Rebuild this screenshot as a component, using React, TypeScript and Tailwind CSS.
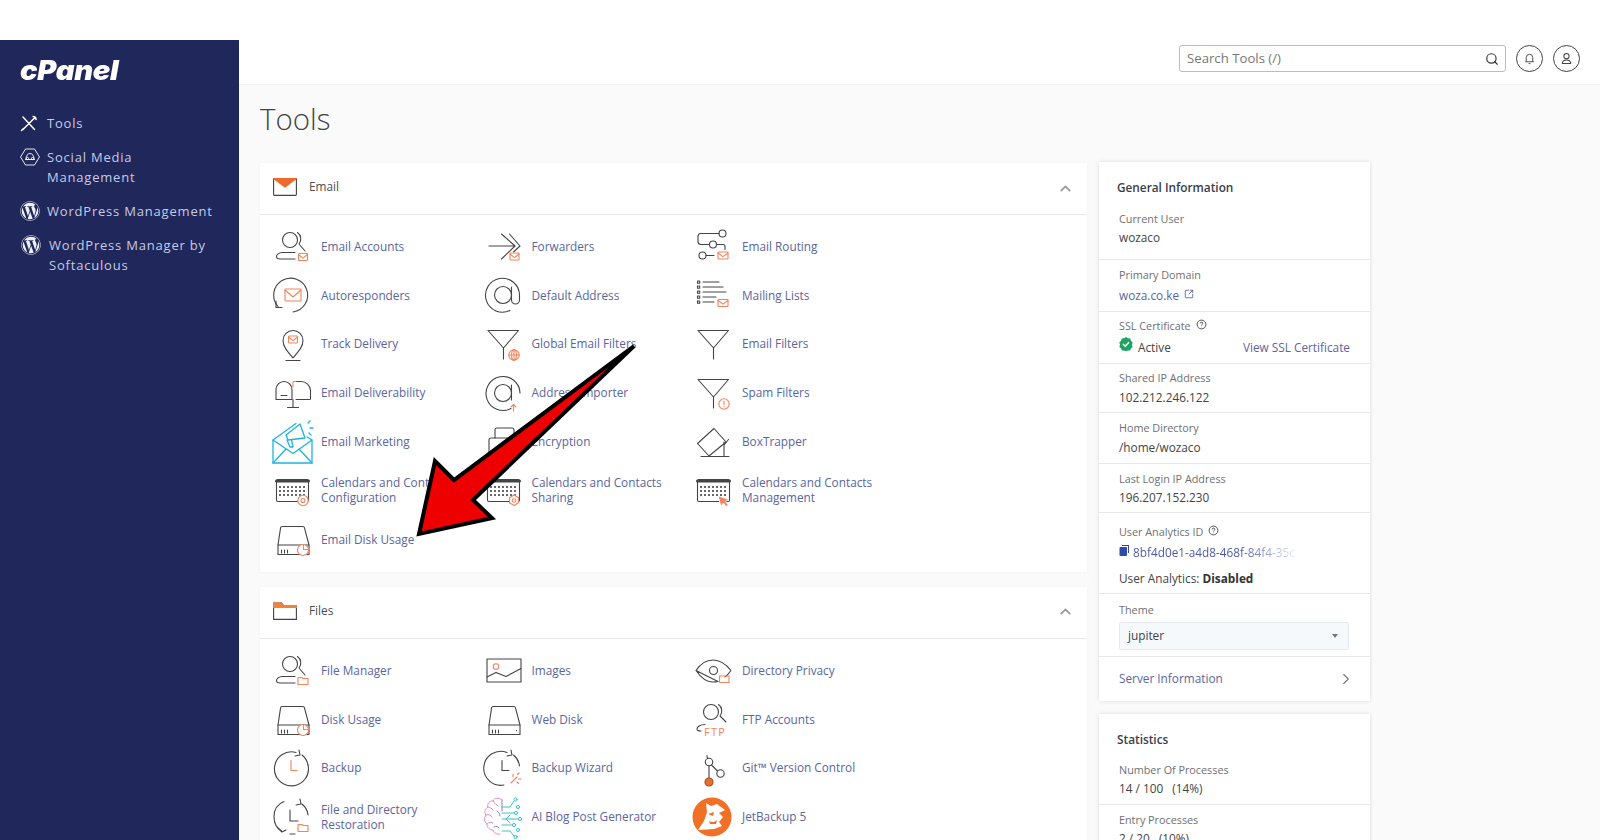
import type { ReactNode } from "react";
import { FaWordpress } from "react-icons/fa";
import { ChevronRight, ChevronUp, Search, SquareArrowOutUpRight } from "lucide-react";

const INK = "#444";
const ORANGE = "#f0845c";

function Ico({ children }: { children: ReactNode }) {
  return (
    <svg viewBox="0 0 44 44" className="h-11 w-11 overflow-visible" fill="none" stroke={INK} strokeWidth="1.1" strokeLinecap="round" strokeLinejoin="round">
      {children}
    </svg>
  );
}

function MailBadge({ x, y, w = 9, h = 7 }: { x: number; y: number; w?: number; h?: number }) {
  return (
    <g stroke={ORANGE}>
      <rect x={x - w / 2} y={y - h / 2} width={w} height={h} rx="0.8" />
      <path d={`M${x - w / 2} ${y - h / 2 + 1}L${x} ${y + h / 6}L${x + w / 2} ${y - h / 2 + 1}`} />
    </g>
  );
}

function FolderBadge({ x, y }: { x: number; y: number }) {
  return <path d={`M${x - 5} ${y + 3.5}V${y - 3.5}H${x - 1}L${x} ${y - 2.5}H${x + 5}V${y + 3.5}Z`} stroke={ORANGE} />;
}

const person = (
  <>
    <circle cx="21" cy="16" r="7.500" />
    <path d="M28.500 8.500a8 8 0 0 1 1.500 11.500l6 7" />
    <path d="M26 28.500H13c-3 0-5.500 2.500-5.500 4S9 35 11 35h15" />
  </>
);

const funnel = (
  <>
    <path d="M8 8.500H38.500L23.500 26L8 8.500Z" />
    <path d="M23.500 26V37" />
  </>
);

const calendar = (
  <>
    <rect x="7.500" y="11.500" width="32" height="22" rx="1.500" />
    <path d="M7.500 13H39.500" strokeWidth="3" />
    {[19, 23, 27].map((y) =>
      [11, 15, 19, 23, 27, 31, 35].map((x) => <rect key={`${x}-${y}`} x={x - 0.9} y={y - 0.9} width="1.800" height="1.800" fill={INK} stroke="none" />),
    )}
  </>
);

const disk = (
  <>
    <path d="M13 9.500H34c.8 0 1.200.5 1.400 1.200L40 28v9.500H9V28l2.600-17.300C11.800 10 12.300 9.500 13 9.500Z" />
    <path d="M9 28H40M12.500 33v3M15.500 33v3M18.500 33v3" />
  </>
);

const pie = (
  <g stroke={ORANGE} fill="#fff">
    <circle cx="34" cy="33" r="5.500" />
    <path d="M34.500 27.500V32.500H39.500" fill="#fff" />
  </g>
);

const clockRing = (
  <>
    <path d="M27 6.500A17 17 0 1 0 39 19" />
    <path d="M30 4l1 5-5 1" />
    <path d="M33 9a17 17 0 0 1 6 10" />
  </>
);

const icons: Record<string, ReactNode> = {
  accounts: <Ico>{person}<MailBadge x={34} y={33} /></Ico>,
  forwarders: <Ico><path d="M9 22H35M21.500 10L35 22L21.500 35M29.500 10L40 22L33.500 28" /><MailBadge x={34.500} y={32.500} /></Ico>,
  autoresponders: (
    <Ico>
      <path d="M9 33.500A17 17 0 1 1 24 39" />
      <path d="M7 28v6.500h6" />
      <MailBadge x={24} y={22} w={16} h={12} />
    </Ico>
  ),
  defaultAddress: (
    <Ico>
      <circle cx="23" cy="22" r="8.500" />
      <path d="M31.500 14V27a4 4 0 0 0 8 0V22A17 17 0 1 0 30 37.500" />
    </Ico>
  ),
  track: (
    <Ico>
      <path d="M24 36C18 29 14 24.500 14 18.500a10 10 0 0 1 20 0C34 24.500 30 29 24 36Z" />
      <path d="M17 38.500H31" />
      <MailBadge x={24} y={17.500} w={9} h={7} />
    </Ico>
  ),
  globalFilters: (
    <Ico>
      {funnel}
      <g stroke={ORANGE}>
        <circle cx="34" cy="33" r="5.200" />
        <path d="M28.800 33H39.200M34 27.800V38.200" />
        <ellipse cx="34" cy="33" rx="2.400" ry="5.200" />
      </g>
    </Ico>
  ),
  deliverability: (
    <Ico>
      <path d="M7 28.500V18.500a8 8 0 0 1 16 0V28.500H8c-.6 0-1-.4-1-1Z" />
      <path d="M27 10.500h5a9.500 9.500 0 0 1 9.500 9V27.500c0 .6-.4 1-1 1H27" />
      <path d="M12 24.500H18M24 28.500V36.500M18.500 36.500H29.500" />
      <path d="M24 16V10.500H27" stroke={ORANGE} />
    </Ico>
  ),
  importer: (
    <Ico>
      <circle cx="23" cy="22" r="8.500" />
      <path d="M31.500 14V29M31 37.500A17 17 0 1 1 40 22" />
      <path d="M33.500 40V33.500M31 36l2.500-2.500L36 36" stroke={ORANGE} />
    </Ico>
  ),
  marketing: (
    <svg viewBox="0 0 44 44" className="h-11 w-11 overflow-visible" fill="none" stroke="#1fb2e0" strokeWidth="1.300" strokeLinecap="round" strokeLinejoin="round">
      <path d="M4 20V43H43V20L24 33.500L4 20Z" />
      <path d="M4 43L17 29M43 43L30 29" />
      <path d="M4 20L27 3.500" />
      <path d="M38 17L43 20" />
      <path d="M17 15l14-11 5 14-17 2-2-5Z" />
      <path d="M18 20l3 7h3l-1.500-7" />
      <path d="M39 3l2-2M41 8h3M40 13l2 2" />
    </svg>
  ),
  encryption: (
    <Ico>
      <rect x="9" y="18" width="28" height="20" rx="2" />
      <path d="M15 18V10a2 2 0 0 1 2-2H32a2 2 0 0 1 2 2v8" />
    </Ico>
  ),
  mailRouting: (
    <Ico>
      <circle cx="32.500" cy="9.500" r="3.500" />
      <circle cx="23" cy="20.500" r="3.500" />
      <circle cx="12.500" cy="31.500" r="3.500" />
      <path d="M29 9.500H11a3 3 0 0 0-3 3v5a3 3 0 0 0 3 3h8.500M26.500 20.500H33a2 2 0 0 1 2 2v3M16 31.500H24" />
      <MailBadge x={33} y={31.500} w={10} h={7} />
    </Ico>
  ),
  lists: (
    <Ico>
      {[9, 14, 19, 24, 29].map((y) => <rect key={y} x="7.500" y={y - 1} width="2.200" height="2.200" />)}
      <path d="M13 9H29M13 14H33M13 19H36M13 24H26M13 29H24" />
      <MailBadge x={33} y={30} w={10} h={7} />
    </Ico>
  ),
  filters: <Ico>{funnel}</Ico>,
  spam: (
    <Ico>
      {funnel}
      <circle cx="34" cy="33" r="5.200" stroke={ORANGE} />
      <path d="M34 30V33.500M34 35.600V35.800" stroke={ORANGE} />
    </Ico>
  ),
  boxtrapper: (
    <Ico>
      <path d="M7.500 23.500L24 8.500L36 22L19 36Z" />
      <path d="M11 36.500H39M34 36V22M38.500 19.500L34 25" />
    </Ico>
  ),
  calAt: (
    <Ico>
      {calendar}
      <circle cx="34" cy="32.500" r="5.200" stroke={ORANGE} fill="#fff" />
      <circle cx="34" cy="32.500" r="2" stroke={ORANGE} />
    </Ico>
  ),
  calShare: (
    <Ico>
      {calendar}
      <path d="M34 27l4.500 2.800v5L34 37.500l-4.500-2.700v-5Z" stroke={ORANGE} fill="#fff" />
      <circle cx="34" cy="32.500" r="1.800" stroke={ORANGE} />
    </Ico>
  ),
  calManage: (
    <Ico>
      {calendar}
      <path d="M28.500 28L39 31.500L35.500 33.500L38.500 37.500L36 38.500L33.500 35L31 38Z" fill={ORANGE} stroke="#fff" strokeWidth="0.800" />
    </Ico>
  ),
  diskPie: <Ico>{disk}{pie}</Ico>,
  fileManager: <Ico>{person}<FolderBadge x={34} y={33} /></Ico>,
  images: (
    <Ico>
      <rect x="7" y="11" width="34" height="23" />
      <circle cx="16" cy="18.500" r="2.800" stroke={ORANGE} />
      <path d="M7 29L16 24.500L26 28.500L41 20.500" />
    </Ico>
  ),
  privacy: (
    <Ico>
      <path d="M6 22.500C11 15 17 12 23 12s12 3 18 10.500C38.500 26 37 27.500 35 29M28 33.500c-1.500.3-3 .5-5 .5C17 34 11 30 6 22.500Z" />
      <circle cx="23.500" cy="22.500" r="4" />
      <rect x="29.500" y="28" width="9.500" height="6.500" stroke={ORANGE} />
    </Ico>
  ),
  webDisk: (
    <Ico>
      <path d="M13 9.500H34c.8 0 1.200.5 1.400 1.200L40 28v9.500H9V28l2.600-17.300C11.800 10 12.300 9.500 13 9.500Z" />
      <path d="M9 28H40M12.500 33v3M15.500 33v3M18.500 33v3M36.500 33.500v.3" />
    </Ico>
  ),
  ftp: (
    <Ico>
      <circle cx="21" cy="15" r="7.500" />
      <path d="M28.500 7.500a8 8 0 0 1 1.500 11.500l6 6" />
      <path d="M15 27.500c-5 0-8 2.500-8 4.500s1.500 2 4 2" />
      <text x="14" y="38.500" fill={ORANGE} stroke="none" fontFamily="'Open Sans', sans-serif" fontSize="11" letterSpacing="1.200">FTP</text>
    </Ico>
  ),
  backup: (
    <Ico>
      {clockRing}
      <path d="M22 14.500V24.500H28" stroke={ORANGE} />
    </Ico>
  ),
  backupWizard: (
    <Ico>
      <path d="M27 6.500A17 17 0 1 0 24 39" />
      <path d="M31 4l1 5-5 1M33.500 9a17 17 0 0 1 6 11" />
      <path d="M22 14.500V24.500H29" />
      <path d="M31 37L37 31M33 28v2.500M39 27l-1.500 1.500M41 33h-2.500M38.500 37.500L37 36" stroke={ORANGE} />
    </Ico>
  ),
  git: (
    <Ico>
      <circle cx="19" cy="16" r="3.700" />
      <circle cx="30.500" cy="27.500" r="3.700" />
      <path d="M17 9.500L17.500 12.500M19 20V32M21.500 19L27.500 25" />
      <circle cx="19" cy="36" r="4" fill="#e8702f" stroke="#a8471a" />
    </Ico>
  ),
  restoration: (
    <Ico>
      <path d="M15 6.500C8.500 9 5 15 5 22c0 6 3 11.500 8 14.500" />
      <path d="M9 33l4 4 4-2" />
      <path d="M31 4l1 5-5 1" />
      <path d="M33 9a17 17 0 0 1 6 11" />
      <path d="M21 15V26H29M21 39H26" />
      <FolderBadge x={34} y={33} />
    </Ico>
  ),
  aiBlog: (
    <svg viewBox="0 0 44 44" className="h-11 w-11 overflow-visible" fill="none" strokeWidth="1" strokeLinecap="round" strokeLinejoin="round">
      <g stroke="#e88bc0">
        <path d="M22 5c-3-3-8-2-9 1-4 0-6 3-5 6-3 2-4 5-2 8-2 3-2 7 1 9 0 4 3 6 6 6 1 3 4 5 7 4" />
        <path d="M13 6c1 3 4 3 5 5M8 12c2 1 4 1 5 3M6 20c3-1 5 0 6 2M7 29c2-2 5-2 6-1" />
      </g>
      <g stroke="#8f7fc4">
        <path d="M22 5V16M17 16c2 1 3 3 3 5M14 32c2-1 4-1 5 1" />
      </g>
      <g stroke="#3cc4c8">
        <path d="M22 12H30L34 6M22 18H34M22 24H38M22 30H32M22 36H30L34 41M26 24L30 20M26 24L30 28" />
        <circle cx="35.500" cy="4.500" r="1.600" />
        <circle cx="36" cy="18" r="1.600" />
        <circle cx="40" cy="24" r="1.600" />
        <circle cx="34" cy="30" r="1.600" />
        <circle cx="35.500" cy="42" r="1.600" />
        <circle cx="38" cy="12" r="1.600" />
        <circle cx="38" cy="35" r="1.600" />
      </g>
    </svg>
  ),
  jetbackup: (
    <svg viewBox="0 0 44 44" className="h-11 w-11 overflow-visible">
      <circle cx="22" cy="22" r="19.500" fill="#f26f26" />
      <path d="M16 8L21 11L27 9L35 15L29 18L33 22L29 27L32 31L24 34L8 35L14 26L17 17Z" fill="#fff" />
      <path d="M18 19L24 17L23 21ZM19 26C22 28 25 27 27 25L26 29L20 29Z" fill="#f26f26" />
    </svg>
  ),
};

const emailTools: [string, string][] = [
  ["accounts", "Email Accounts"],
  ["forwarders", "Forwarders"],
  ["mailRouting", "Email Routing"],
  ["autoresponders", "Autoresponders"],
  ["defaultAddress", "Default Address"],
  ["lists", "Mailing Lists"],
  ["track", "Track Delivery"],
  ["globalFilters", "Global Email Filters"],
  ["filters", "Email Filters"],
  ["deliverability", "Email Deliverability"],
  ["importer", "Address Importer"],
  ["spam", "Spam Filters"],
  ["marketing", "Email Marketing"],
  ["encryption", "Encryption"],
  ["boxtrapper", "BoxTrapper"],
  ["calAt", "Calendars and Contacts Configuration"],
  ["calShare", "Calendars and Contacts Sharing"],
  ["calManage", "Calendars and Contacts Management"],
  ["diskPie", "Email Disk Usage"],
];

const fileTools: [string, string][] = [
  ["fileManager", "File Manager"],
  ["images", "Images"],
  ["privacy", "Directory Privacy"],
  ["diskPie", "Disk Usage"],
  ["webDisk", "Web Disk"],
  ["ftp", "FTP Accounts"],
  ["backup", "Backup"],
  ["backupWizard", "Backup Wizard"],
  ["git", "Git™ Version Control"],
  ["restoration", "File and Directory Restoration"],
  ["aiBlog", "AI Blog Post Generator"],
  ["jetbackup", "JetBackup 5"],
];

function ToolGrid({ tools }: { tools: [string, string][] }) {
  return (
    <div className="grid grid-cols-[repeat(3,210.5px)] pb-[8.4px] pl-[9px] pt-[7px]">
      {tools.map(([icon, label]) => (
        <a key={label} className="flex h-[48.8px] items-center gap-[8px]">
          <span className="flex h-11 w-11 shrink-0 items-center justify-center">{icons[icon]}</span>
          <span className="w-[148px] text-[11.8px] leading-[15px] text-[#5a659f]">{label}</span>
        </a>
      ))}
    </div>
  );
}

function ToolCard({ title, icon, children }: { title: string; icon: ReactNode; children: ReactNode }) {
  return (
    <section className="bg-white shadow-[0_0_3px_rgba(0,0,0,0.04)]">
      <header className="flex h-[52px] items-center border-b border-[#e6e6e6] pb-[3px] pl-[13px] pr-[13px]">
        {icon}
        <h2 className="ml-3 text-[11.8px] text-[#4c4c55]">{title}</h2>
        <ChevronUp className="ml-auto mt-[2px] h-[17px] w-[17px] text-[#9a9a9a]" strokeWidth={2.5} />
      </header>
      {children}
    </section>
  );
}

function InfoLabel({ children }: { children: ReactNode }) {
  return <p className="text-[10.8px] font-medium leading-4 text-[#6f6f73]">{children}</p>;
}

function InfoValue({ children, className }: { children: ReactNode; className: string }) {
  return <p className={`text-[11.8px] leading-[18px] text-[#444] ${className}`}>{children}</p>;
}

function HelpDot() {
  return (
    <svg viewBox="0 0 12 12" className="h-[11px] w-[11px]" fill="none" stroke="#444" strokeWidth="1">
      <circle cx="6" cy="6" r="4.800" />
      <path d="M4.600 4.800a1.400 1.400 0 1 1 2.100 1.200c-.5.300-.7.500-.7 1M6 8.500v.4" />
    </svg>
  );
}

export default function App() {
  return (
    <div className="relative h-[840px] overflow-hidden bg-white pt-10 font-['Open_Sans',sans-serif]">
      <div className="flex h-[800px]">
        <aside className="w-[239px] shrink-0 bg-[#20275a] pl-5 text-[13px] leading-5 tracking-[0.8px] text-[#c5cbe6]">
          <div className="mt-[16px] h-[30px] origin-left scale-x-[1.08] font-['Inter',sans-serif] text-[27px] font-black italic leading-[30px] tracking-[-0.3px] text-white">cPanel</div>
          <nav className="mt-[27px] flex flex-col">
            <a className="flex h-[20px] items-center gap-[9px]">
              <svg viewBox="0 0 18 18" className="h-[18px] w-[18px] shrink-0" fill="none" stroke="#fff" strokeWidth="1.500" strokeLinecap="round">
                <path d="M3 15.500L15 3.500M3 3l11.500 12.500M13 2.500a3 3 0 0 1 3 3M1.500 16.500l2-2" />
              </svg>
              <span>Tools</span>
            </a>
            <a className="mt-[14px] flex gap-[7px]">
              <svg viewBox="0 0 20 20" className="h-5 w-5 shrink-0" fill="none" stroke="#fff" strokeWidth="0.900">
                <path d="M5.500 2h9L19.500 10l-5 8h-9L.500 10Z" />
                <path d="M6 12c0-3 1.500-5.500 4-5.500s4 2.500 4 5.500M5 12.500h10" />
                <circle cx="7.500" cy="11.500" r="1.100" />
                <circle cx="12.500" cy="11.500" r="1.100" />
              </svg>
              <span>Social Media<br />Management</span>
            </a>
            <a className="mt-[14px] flex items-center gap-[7px]">
              <FaWordpress className="h-5 w-5 shrink-0 text-[#eef0f8]" />
              <span>WordPress Management</span>
            </a>
            <a className="ml-px mt-[14px] flex gap-[8px]">
              <FaWordpress className="h-5 w-5 shrink-0 text-[#eef0f8]" />
              <span>WordPress Manager by<br />Softaculous</span>
            </a>
          </nav>
        </aside>

        <div className="flex min-w-0 flex-1 flex-col">
          <header className="flex h-[45px] shrink-0 items-start border-b border-[#f0f0f0] bg-white pl-[940px] pt-[5px]">
            <div className="flex h-[27px] w-[327px] items-center rounded-[3px] border border-[#b9bcc0] pl-[7px] pr-[6px]">
              <span className="text-[13.2px] text-[#777]">Search Tools (/)</span>
              <Search className="ml-auto h-[14px] w-[14px] text-[#333]" strokeWidth={2} />
            </div>
            <button className="ml-[10px] flex h-[27px] w-[27px] items-center justify-center rounded-full border border-[#444]">
              <svg viewBox="0 0 14 14" className="h-[13px] w-[13px]" fill="none" stroke="#444" strokeWidth="1">
                <path d="M2.500 10.500h9M3.500 10.500V6a3.500 3.500 0 0 1 7 0v4.500M6 12.500h2" />
              </svg>
            </button>
            <button className="ml-[10px] flex h-[27px] w-[27px] items-center justify-center rounded-full border border-[#444]">
              <svg viewBox="0 0 14 14" className="h-[13px] w-[13px]" fill="none" stroke="#444" strokeWidth="1.100">
                <circle cx="7" cy="4.500" r="2.800" />
                <path d="M2.500 12.500c0-2.500 2-4 4.500-4s4.500 1.500 4.500 4Z" />
              </svg>
            </button>
          </header>

          <main className="min-h-0 flex-1 bg-[#fafafa] pl-[21px]">
            <h1 className="h-[78px] pt-[12px] text-[29.5px] font-light leading-[44px] text-[#444]">Tools</h1>
            <div className="flex items-start gap-3">
              <div className="flex w-[827px] shrink-0 flex-col gap-[15px]">
                <ToolCard
                  title="Email"
                  icon={
                    <svg viewBox="0 0 24 18" className="h-[18px] w-6" fill="none" stroke="#444" strokeWidth="1.100">
                      <rect x="0.600" y="0.600" width="22.800" height="16.800" rx="0.800" />
                      <path d="M.600 .600H23.400L12 9Z" fill="#f0682c" stroke="#f0682c" />
                    </svg>
                  }
                >
                  <ToolGrid tools={emailTools} />
                </ToolCard>
                <ToolCard
                  title="Files"
                  icon={
                    <svg viewBox="0 0 24 18" className="h-[18px] w-6" fill="none" stroke="#444" strokeWidth="1.100">
                      <path d="M.600 17.400V1h8l1.800 2.500H23.400V17.400Z" />
                      <path d="M.600 5.500V1h8l2 2.500H23.400V5.500Z" fill="#f0823c" stroke="#f0823c" />
                    </svg>
                  }
                >
                  <ToolGrid tools={fileTools} />
                </ToolCard>
              </div>

              <div className="-mt-px flex w-[271px] shrink-0 flex-col gap-[13px]">
                <section className="bg-white shadow-[0_0_4px_rgba(0,0,0,0.12)]">
                  <div className="h-[98px] border-b border-[#e8e8e8] pl-[20px] pt-[16px]">
                    <h3 className="-ml-[2px] text-[11.8px] font-semibold leading-[18px] text-[#38404a]">General Information</h3>
                    <div className="mt-[15px]"><InfoLabel>Current User</InfoLabel></div>
                    <InfoValue className="mt-[1px]">wozaco</InfoValue>
                  </div>
                  <div className="h-[52px] border-b border-[#e8e8e8] pl-[20px] pt-[7px]">
                    <InfoLabel>Primary Domain</InfoLabel>
                    <p className="mt-[3px] flex items-center gap-[5px] text-[11.8px] leading-[18px] text-[#5a659f]">
                      woza.co.ke
                      <SquareArrowOutUpRight className="mb-[3px] h-[10px] w-[10px] text-[#4a5aa8]" strokeWidth={2} />
                    </p>
                  </div>
                  <div className="h-[52px] border-b border-[#e8e8e8] pl-[20px] pr-[20px] pt-[6px]">
                    <div className="flex items-center gap-[5px]">
                      <InfoLabel>SSL Certificate</InfoLabel>
                      <span className="mb-[3px]"><HelpDot /></span>
                    </div>
                    <div className="mt-[3px] flex items-center text-[11.8px] leading-[18px]">
                      <svg viewBox="0 0 14 14" className="mb-[5px] h-[14px] w-[14px]">
                        <path d="M7 0l2 1.200 2.300.3.600 2.200L13.700 5.500 13 7.700l.6 2.200-1.700 1.500-.6 2.200-2.300-.1L7 14.500l-2-1-2.300.1-.6-2.200L.4 9.900 1 7.700.3 5.500l1.800-1.800.6-2.200L5 1.200Z" fill="#1fa463" />
                        <path d="M4 7l2.200 2.200L10 5.200" fill="none" stroke="#fff" strokeWidth="1.500" />
                      </svg>
                      <span className="ml-[5px] text-[#444]">Active</span>
                      <span className="ml-auto text-[#5a659f]">View SSL Certificate</span>
                    </div>
                  </div>
                  <div className="h-[49px] border-b border-[#e8e8e8] pl-[20px] pt-[6px]">
                    <InfoLabel>Shared IP Address</InfoLabel>
                    <InfoValue className="mt-[2px]">102.212.246.122</InfoValue>
                  </div>
                  <div className="h-[51px] border-b border-[#e8e8e8] pl-[20px] pt-[7px]">
                    <InfoLabel>Home Directory</InfoLabel>
                    <InfoValue className="mt-[2px]">/home/wozaco</InfoValue>
                  </div>
                  <div className="h-[49px] border-b border-[#e8e8e8] pl-[20px] pt-[7px]">
                    <InfoLabel>Last Login IP Address</InfoLabel>
                    <InfoValue className="mt-[1px]">196.207.152.230</InfoValue>
                  </div>
                  <div className="h-[81px] border-b border-[#e4e4e4] pl-[20px] pt-[11px]">
                    <div className="flex items-center gap-[5px]">
                      <InfoLabel>User Analytics ID</InfoLabel>
                      <span className="mb-[3px]"><HelpDot /></span>
                    </div>
                    <p className="mt-[3px] flex items-center text-[11.8px] leading-[18px]">
                      <svg viewBox="0 0 10 11" className="mb-[3px] h-[11px] w-[10px]" fill="#2f4aa8">
                        <rect x="0.500" y="2" width="7.500" height="9" rx="1" />
                        <path d="M3 0H10V8H9V1H3Z" />
                      </svg>
                      <span className="ml-1 w-[178px] overflow-hidden whitespace-nowrap bg-linear-to-r from-[#4a55a8] from-60% to-transparent to-95% bg-clip-text text-transparent">8bf4d0e1-a4d8-468f-84f4-35c</span>
                    </p>
                    <p className="mt-[8px] text-[11.8px] leading-[18px] text-[#444]">User Analytics: <b className="font-bold text-[#333]">Disabled</b></p>
                  </div>
                  <div className="h-[63px] border-b border-[#e8e8e8] pl-[20px] pr-[21px] pt-[8px]">
                    <InfoLabel>Theme</InfoLabel>
                    <div className="mt-[4px] flex h-[28px] items-center rounded-[2px] border border-[#e6eaef] bg-[#f6f9fc] px-2 text-[11.8px] text-[#444]">
                      jupiter
                      <span className="ml-auto mr-[2px] h-0 w-0 border-x-[3px] border-t-[4px] border-x-transparent border-t-[#777]" />
                    </div>
                  </div>
                  <div className="flex h-[44px] items-center pl-[20px] pr-[15px] text-[11.8px] text-[#5a659f]">
                    Server Information
                    <ChevronRight className="ml-auto h-[18px] w-[18px] text-[#777]" strokeWidth={1.500} />
                  </div>
                </section>

                <section className="bg-white shadow-[0_0_4px_rgba(0,0,0,0.12)]">
                  <div className="h-[91px] border-b border-[#e8e8e8] pl-[20px] pt-[16px]">
                    <h3 className="-ml-[2px] text-[11.8px] font-semibold leading-[18px] text-[#38404a]">Statistics</h3>
                    <div className="mt-[14px]"><InfoLabel>Number Of Processes</InfoLabel></div>
                    <InfoValue className="mt-[1px] whitespace-pre">14 / 100   (14%)</InfoValue>
                  </div>
                  <div className="pl-[20px] pt-[7px]">
                    <InfoLabel>Entry Processes</InfoLabel>
                    <InfoValue className="mt-[1px] whitespace-pre">2 / 20   (10%)</InfoValue>
                  </div>
                </section>
              </div>
            </div>
          </main>
        </div>
      </div>

      {/* annotation drawn over the screenshot */}
      <svg viewBox="0 0 1600 840" className="pointer-events-none absolute left-0 top-0 h-[840px] w-[1600px]">
        <path d="M634 346L454 480L435 461L419 534L492 518L473 500Z" fill="#ee0000" stroke="#000" strokeWidth="4" strokeLinejoin="miter" />
      </svg>
    </div>
  );
}
